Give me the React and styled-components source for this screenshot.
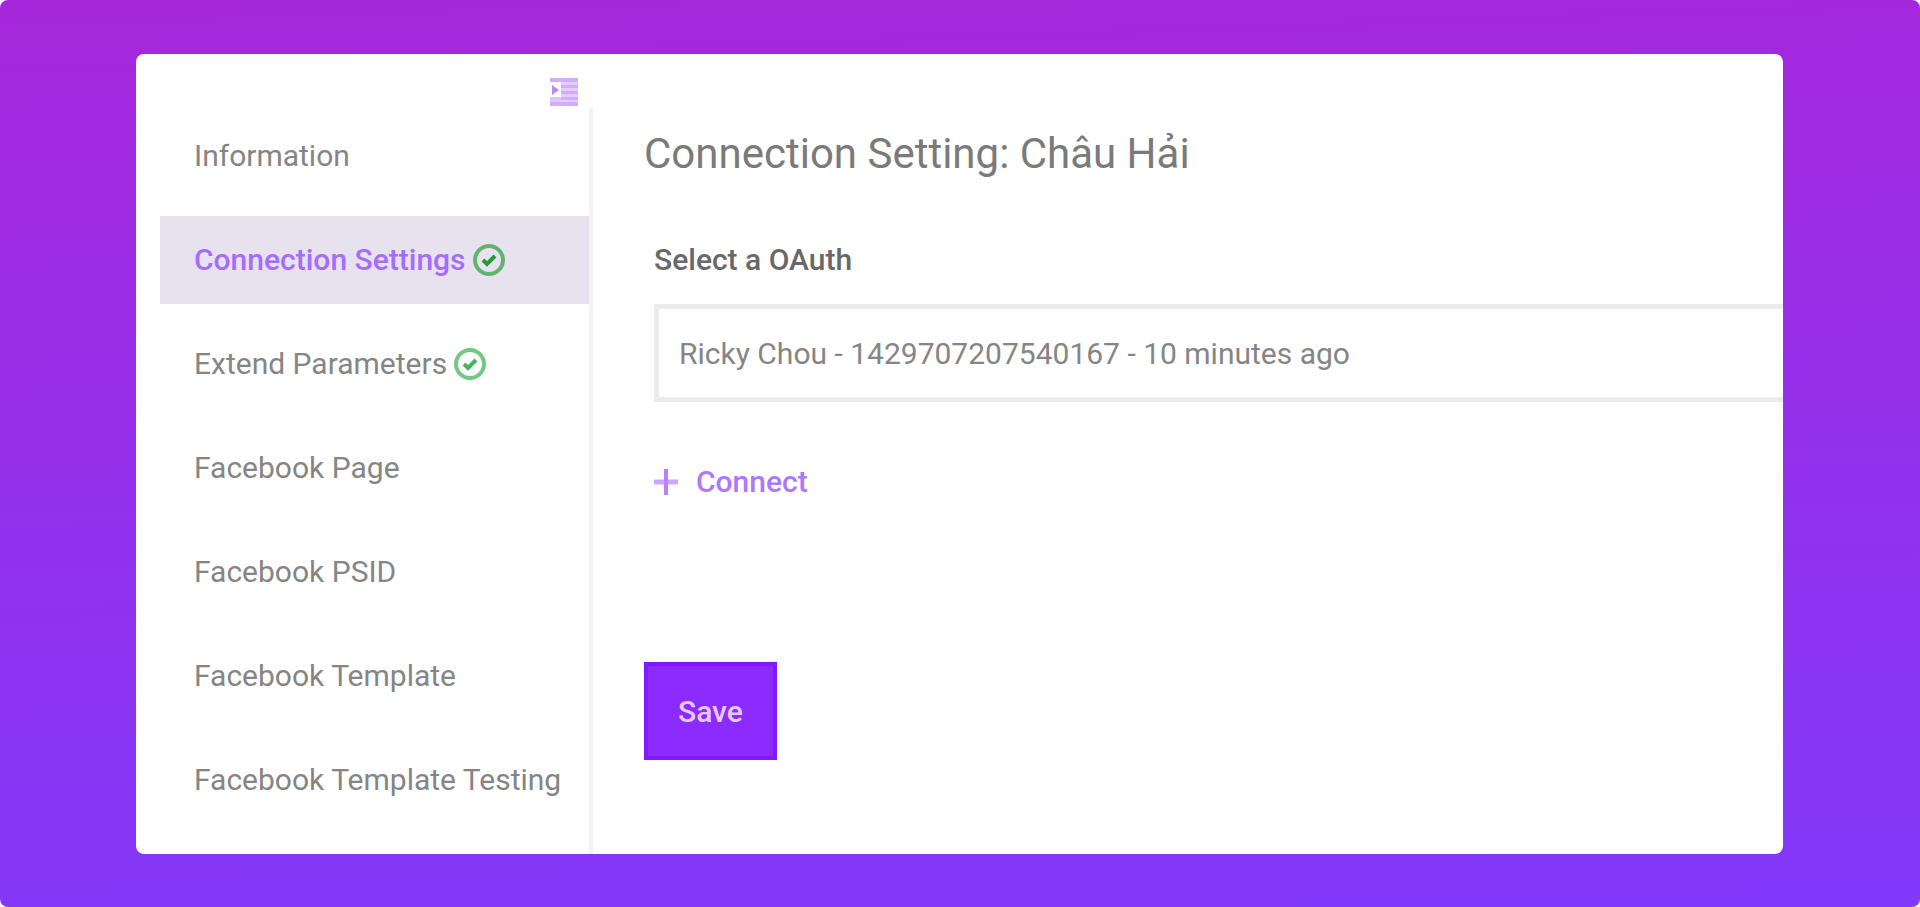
import React from "react";
import styled, { createGlobalStyle } from "styled-components";

const MENU_ITEMS = [
    { label: "Information" },
    { label: "Connection Settings", active: true, done: true },
    { label: "Extend Parameters", done: true },
    { label: "Facebook Page" },
    { label: "Facebook PSID" },
    { label: "Facebook Template" },
    { label: "Facebook Template Testing" },
];

const IndentIcon = () => (
    <svg width="32" height="32" viewBox="0 0 32 32" fill="#d2adff" aria-hidden="true">
        <rect x="1" y="2" width="28" height="4" />
        <rect x="12" y="6" width="17" height="20" opacity="0.6" />
        <rect x="12" y="9" width="17" height="3" />
        <rect x="12" y="15" width="17" height="3" />
        <rect x="12" y="21" width="17" height="3" />
        <rect x="1" y="21" width="11" height="5" opacity="0.7" />
        <rect x="1" y="26" width="28" height="4" />
        <path d="M3 9L10 14L3 19Z" fill="#bd85ff" />
    </svg>
);

const CheckIcon = ({ active }) => (
    <svg
        width="34"
        height="34"
        viewBox="0 0 34 34"
        fill="none"
        stroke={active ? "#5fb470" : "#72c982"}
        strokeWidth="4"
        aria-hidden="true"
    >
        <circle cx="17" cy="17" r="14" />
        <path d="M11 17L15 21L23 13" stroke={active ? "#239b35" : "#48b35b"} />
    </svg>
);

const PlusIcon = () => (
    <svg width="28" height="28" viewBox="0 0 28 28" aria-hidden="true">
        <path d="M0 14H24" stroke="#cda6ff" strokeWidth="5" />
        <path d="M12 1V27" stroke="#b980ff" strokeWidth="4" />
    </svg>
);

const App = () => {
    return (
        <>
            <GlobalStyle />
            <Page>
                <Card>
                    <Sidebar>
                        <ToggleButton type="button" aria-label="Toggle menu">
                            <IndentIcon />
                        </ToggleButton>
                        <Menu>
                            {MENU_ITEMS.map(({ label, active, done }) => (
                                <MenuItem key={label} href="#" $active={active}>
                                    {label}
                                    {done && <CheckIcon active={active} />}
                                </MenuItem>
                            ))}
                        </Menu>
                    </Sidebar>
                    <Content>
                        <Title>Connection Setting: Châu Hải</Title>
                        <Field>
                            <Label htmlFor="oauth">Select a OAuth</Label>
                            <Select id="oauth">
                                <option>Ricky Chou - 1429707207540167 - 10 minutes ago</option>
                            </Select>
                            <ConnectButton type="button">
                                <PlusIcon />
                                Connect
                            </ConnectButton>
                        </Field>
                        <SaveButton type="button">Save</SaveButton>
                    </Content>
                </Card>
            </Page>
        </>
    );
};

export default App;

const GlobalStyle = createGlobalStyle`
    * {
        box-sizing: border-box;
    }
    body {
        margin: 0;
        background: #ffffff;
        font-family: Roboto, "Liberation Sans", sans-serif;
    }
    button,
    select {
        font-family: inherit;
    }
`;

const Page = styled.div`
    display: flex;
    min-height: 100vh;
    padding: 54px 137px 53px 136px;
    border-radius: 8px;
    background: linear-gradient(178deg, #a627db 0%, #8239fb 100%);
`;

const Card = styled.div`
    display: flex;
    flex: 1;
    overflow: hidden;
    border-radius: 8px;
    background: #ffffff;
`;

const Sidebar = styled.aside`
    display: flex;
    flex-direction: column;
    flex-shrink: 0;
    width: 457px;
    padding: 22px 0 0 24px;
`;

const ToggleButton = styled.button`
    display: flex;
    align-self: flex-end;
    margin-right: 12px;
    padding: 0;
    border: none;
    background: none;
    cursor: pointer;
`;

const Menu = styled.nav`
    display: flex;
    flex: 1;
    flex-direction: column;
    gap: 16px;
    padding-top: 4px;
    border-right: 4px solid #f3f3f3;
`;

const MenuItem = styled.a`
    display: flex;
    align-items: center;
    gap: 6px;
    height: 88px;
    padding-left: 34px;
    background: ${({ $active }) => ($active ? "#e8e2ee" : "transparent")};
    color: ${({ $active }) => ($active ? "#a46cff" : "#858585")};
    font-weight: ${({ $active }) => ($active ? 500 : 400)};
    font-size: 30px;
    line-height: 36px;
    text-decoration: none;
    white-space: nowrap;
`;

const Content = styled.main`
    display: flex;
    flex: 1;
    flex-direction: column;
    align-items: flex-start;
    min-width: 0;
    padding: 72px 0 0 51px;
`;

const Title = styled.h1`
    margin: 0;
    color: #7a7a7a;
    font-weight: 400;
    font-size: 42px;
    line-height: 56px;
`;

const Field = styled.div`
    display: flex;
    flex-direction: column;
    align-items: flex-start;
    align-self: stretch;
    padding: 60px 0 0 10px;
`;

const Label = styled.label`
    color: #686868;
    font-weight: 500;
    font-size: 30px;
    line-height: 36px;
`;

const Select = styled.select`
    width: 100%;
    height: 98px;
    margin-top: 26px;
    padding: 0 20px;
    border: 5px solid #ebebeb;
    border-right: none;
    border-radius: 0;
    background: #ffffff;
    color: #858585;
    font-size: 30px;
    appearance: none;
`;

const ConnectButton = styled.button`
    display: flex;
    align-items: center;
    gap: 14px;
    margin-top: 62px;
    padding: 0;
    border: none;
    background: none;
    color: #ac78ff;
    font-weight: 500;
    font-size: 30px;
    line-height: 36px;
    cursor: pointer;
`;

const SaveButton = styled.button`
    height: 98px;
    margin-top: 162px;
    padding: 0 30px;
    border: 4px solid #8218ff;
    background: #8c2bff;
    color: #e3caff;
    font-weight: 500;
    font-size: 30px;
    cursor: pointer;
`;
